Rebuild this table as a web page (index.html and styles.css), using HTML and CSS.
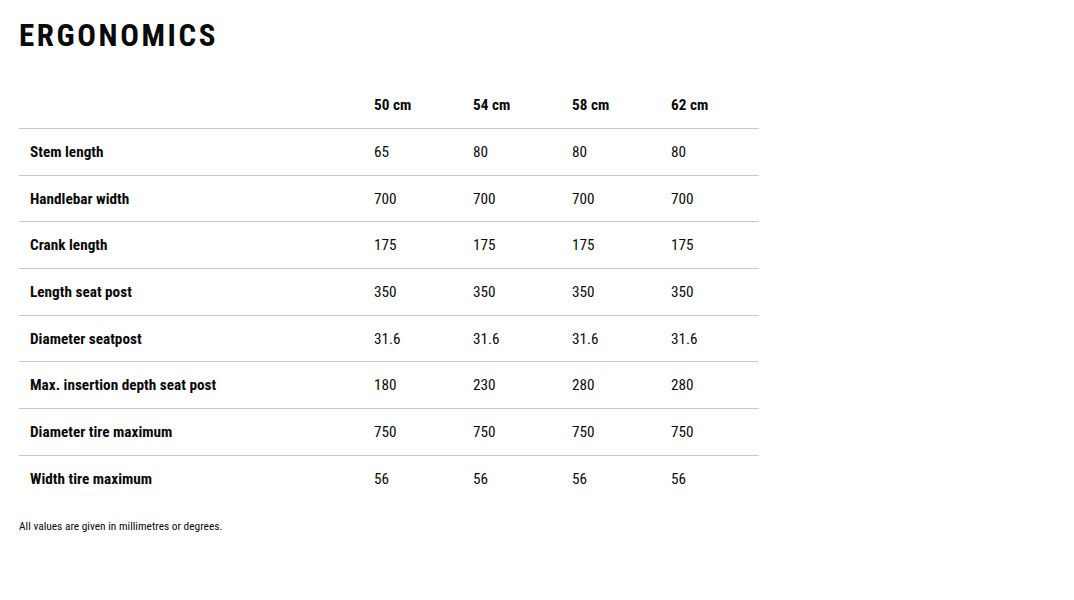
FILE: index.html
```html
<!DOCTYPE html>
<html>
<head>
<meta charset="utf-8">
<link rel="stylesheet" href="styles.css">
</head>
<body>
<main class="page">
  <h1 class="title">ERGONOMICS</h1>
  <table class="geo">
    <thead>
      <tr><th class="label"></th><th>50 cm</th><th>54 cm</th><th>58 cm</th><th>62 cm</th></tr>
    </thead>
    <tbody>
      <tr><th class="label">Stem length</th><td>65</td><td>80</td><td>80</td><td>80</td></tr>
      <tr><th class="label">Handlebar width</th><td>700</td><td>700</td><td>700</td><td>700</td></tr>
      <tr><th class="label">Crank length</th><td>175</td><td>175</td><td>175</td><td>175</td></tr>
      <tr><th class="label">Length seat post</th><td>350</td><td>350</td><td>350</td><td>350</td></tr>
      <tr><th class="label">Diameter seatpost</th><td>31.6</td><td>31.6</td><td>31.6</td><td>31.6</td></tr>
      <tr><th class="label">Max. insertion depth seat post</th><td>180</td><td>230</td><td>280</td><td>280</td></tr>
      <tr><th class="label">Diameter tire maximum</th><td>750</td><td>750</td><td>750</td><td>750</td></tr>
      <tr><th class="label">Width tire maximum</th><td>56</td><td>56</td><td>56</td><td>56</td></tr>
    </tbody>
  </table>
  <p class="note">All values are given in millimetres or degrees.</p>
</main>
</body>
</html>
```
FILE: styles.css
```css
html, body {
  margin: 0;
  padding: 0;
  background: #fff;
}
body {
  font-family: "Roboto Condensed", Roboto, "Liberation Sans", sans-serif;
  font-stretch: 75%;
  color: #0a0a0a;
}
.page {
  padding: 18px 19px 0 19px;
}
.title {
  margin: 0;
  font-size: 31px;
  line-height: 36px;
  font-weight: 700;
  letter-spacing: 2.6px;
}
.geo {
  margin-top: 28px;
  width: 740px;
  border-collapse: collapse;
  table-layout: fixed;
  font-size: 15.25px;
}
.geo th, .geo td {
  height: 46.67px;
  padding: 0 0 0 11px;
  text-align: left;
  vertical-align: middle;
  box-sizing: border-box;
}
.geo th {
  font-weight: 700;
}
.geo td {
  font-weight: 400;
}
.geo th.label {
  width: 344px;
}
.geo thead tr,
.geo tbody tr:not(:last-child) {
  border-bottom: 1px solid #c8c8c8;
}
.note {
  margin: 17px 0 0 0;
  font-size: 11.4px;
}
```
